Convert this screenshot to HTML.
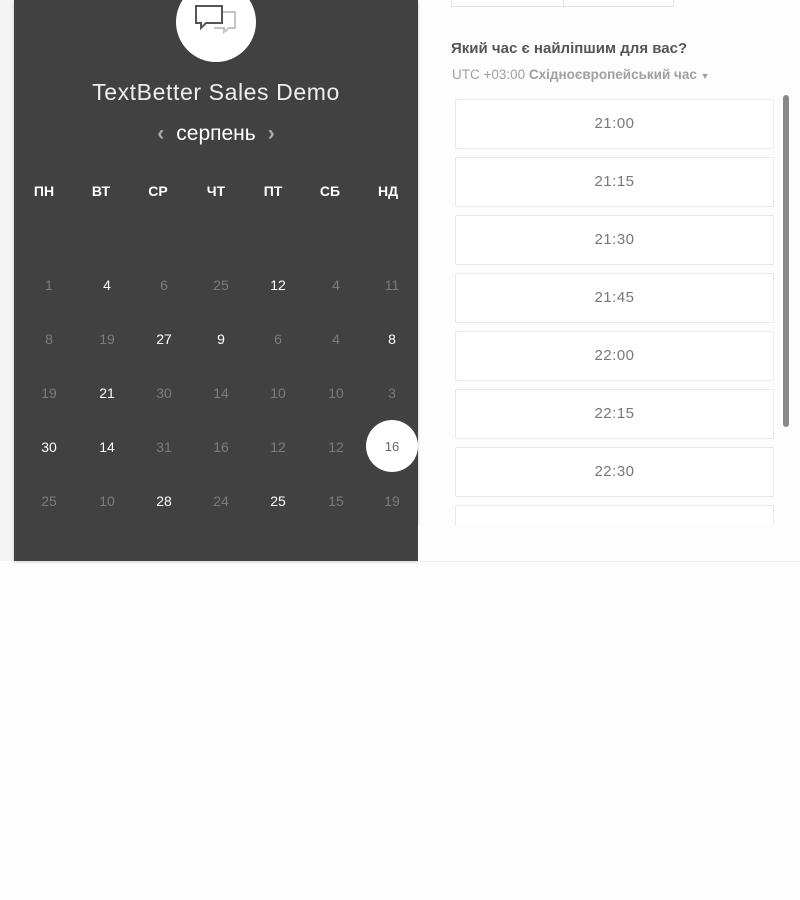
<!DOCTYPE html>
<html><head><meta charset="utf-8"><style>
body{margin:0;width:800px;height:900px;background:#fdfdfd;font-family:"Liberation Sans",sans-serif;position:relative;overflow:hidden}
.side{position:absolute;left:0;top:0;width:14px;height:561px;background:#f4f4f4}
.left{position:absolute;left:14px;top:0;width:404px;height:561px;background:#414141;box-shadow:0 1px 3px rgba(0,0,0,.2)}
.logo{position:absolute;left:176px;top:-18px;width:80px;height:80px;border-radius:50%;background:#fff}
.t{position:absolute;color:#eee}
.num{position:absolute;width:40px;text-align:center;font-size:14px;margin-left:-20px}
.w{color:#fff}.g{color:#7c7c7c}
.slot{position:absolute;left:455px;width:317px;height:48px;border:1px solid #e9e9e9;border-radius:2px;background:#fff;text-align:center;line-height:48px;font-size:15px;color:#777;letter-spacing:.5px}
</style></head><body>
<div class="side"></div>
<div class="left"></div>
<div class="logo"><svg width="80" height="80" viewBox="0 0 80 80"><path d="M38 30h21v16h-6l-5 4v-4h-10" fill="none" stroke="#c4c4c4" stroke-width="2"/><path d="M20 24h26v17H30l-5 5v-5h-5z" fill="#fff" stroke="#555" stroke-width="2"/></svg></div>
<div class="t" style="left:14px;width:404px;top:79px;text-align:center;font-size:23px;font-weight:300;letter-spacing:.6px">TextBetter Sales Demo</div>
<div class="t" style="left:14px;width:404px;top:122px;text-align:center;font-size:21px;color:#fff"><span style="color:#aaa;margin-right:12px;font-weight:bold">‹</span>серпень<span style="color:#aaa;margin-left:12px;font-weight:bold">›</span></div>
<div style="position:absolute;top:183px;left:0;font-size:13px;font-weight:bold;color:#fff">
<span class="num" style="left:44px">ПН</span><span class="num" style="left:101px">ВТ</span><span class="num" style="left:158px">СР</span><span class="num" style="left:216px">ЧТ</span><span class="num" style="left:273px">ПТ</span><span class="num" style="left:330px">СБ</span><span class="num" style="left:388px">НД</span></div>
<div style="position:absolute;left:366px;top:420px;width:52px;height:52px;border-radius:50%;background:#fff"></div>
<div id="cal"></div>
<script>
var r=[["1g","4w","6g","25g","12w","4g","11g"],["8g","19g","27w","9w","6g","4g","8w"],["19g","21w","30g","14g","10g","10g","3g"],["30w","14w","31g","16g","12g","12g","16x"],["25g","10g","28w","24g","25w","15g","19g"]];
var xs=[49,107,164,221,278,336,392],h="";
r.forEach(function(row,i){row.forEach(function(c,j){var n=c.slice(0,-1),k=c.slice(-1);var st=k=="x"?"color:#666;font-size:13px":"";h+='<span class="num '+k+'" style="left:'+xs[j]+'px;top:'+(277+i*54)+'px;'+st+'">'+n+'</span>';});});
document.getElementById('cal').innerHTML=h;
</script>
<div style="position:absolute;left:451px;top:-2px;width:111px;height:8px;border:1px solid #e6e6e6;border-top:none"></div>
<div style="position:absolute;left:562px;top:-2px;width:111px;height:8px;border:1px solid #e6e6e6;border-top:none;border-left:none"></div>
<div style="position:absolute;left:451px;top:40px;font-size:15px;font-weight:bold;color:#555">Який час є найліпшим для вас?</div>
<div style="position:absolute;left:452px;top:67px;font-size:13.5px;color:#a0a0a0">UTC +03:00 <b>Східноєвропейський час</b> <span style="font-size:9px">▼</span></div>
<div class="slot" style="top:99px">21:00</div>
<div class="slot" style="top:157px">21:15</div>
<div class="slot" style="top:215px">21:30</div>
<div class="slot" style="top:273px">21:45</div>
<div class="slot" style="top:331px">22:00</div>
<div class="slot" style="top:389px">22:15</div>
<div class="slot" style="top:447px">22:30</div>
<div class="slot" style="top:505px;height:20px"></div>
<div style="position:absolute;left:418px;top:525px;width:382px;height:36px;background:#fdfdfd"></div>
<div style="position:absolute;left:783px;top:95px;width:6px;height:332px;border-radius:3px;background:#888"></div>
<div style="position:absolute;left:418px;top:561px;width:382px;height:1px;background:#eee"></div>
</body></html>
